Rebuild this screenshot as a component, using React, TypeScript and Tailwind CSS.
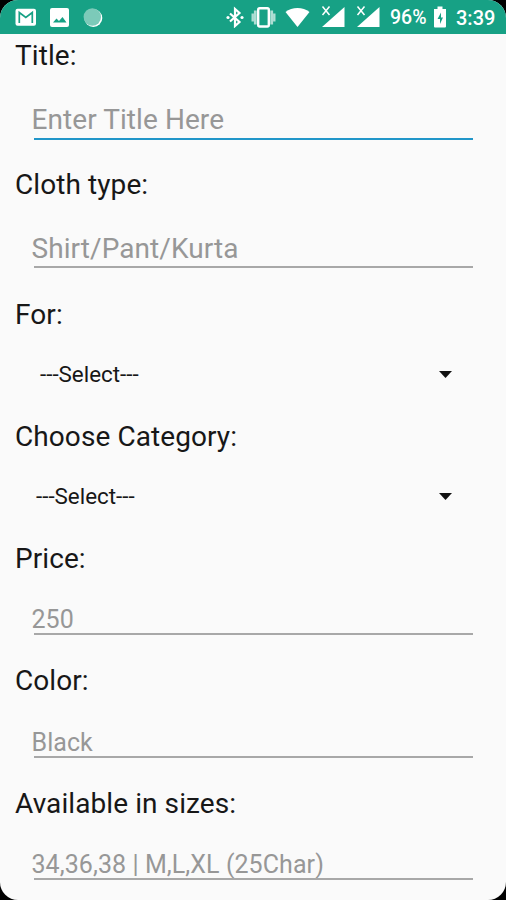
import React from 'react';

type FieldProps = {
  label: string;
  hint: string;
  className: string;
  hintClassName: string;
  lineClassName?: string;
};

const Label = ({ children }: { children: React.ReactNode }) => (
  <label className="block h-8 pl-[15px] text-[28px] leading-[34px] tracking-[0.08px] whitespace-nowrap text-[#171717]">
    {children}
  </label>
);

const TextField = ({ label, hint, className, hintClassName, lineClassName = 'bg-[#a8a8a8]' }: FieldProps) => (
  <div className={`flex flex-col ${className}`}>
    <Label>{label}</Label>
    <div className="flex flex-1 flex-col justify-end pr-[33px]">
      <span className={`pl-[31.5px] leading-8 tracking-[0.07px] whitespace-nowrap text-[#979797] ${hintClassName}`}>{hint}</span>
      <div className={`ml-[34px] h-[2px] ${lineClassName}`} />
    </div>
  </div>
);

const SelectField = ({ label, className, valueClassName }: { label: string; className: string; valueClassName: string }) => (
  <div className={className}>
    <Label>{label}</Label>
    <div className={`mt-7 flex h-8 items-center justify-between pr-[54px] ${valueClassName}`}>
      <span className="text-[22.4px] leading-8 text-[#171717]">---Select---</span>
      <svg className="h-[7px] w-[13px]" viewBox="0 0 13 7" fill="#111">
        <path d="M0 0h13L6.5 7z" />
      </svg>
    </div>
  </div>
);

const Signal = () => (
  <svg className="h-6 w-6" viewBox="0 0 24 24" fill="white">
    <path d="M23.5 2v20H1z" />
    <path d="M1.5 1.5l7 8.5M8.500 1.500l-7 8.500" stroke="white" strokeWidth="1.5" fill="none" />
  </svg>
);

const StatusBar = () => (
  <header className="flex h-[34px] items-center bg-[#17a185] text-white">
    <svg className="ml-[15px] h-[18px] w-[22px]" viewBox="0 0 22 18">
      <rect x="0.5" y="0.8" width="20.5" height="17" rx="2" fill="white" />
      <path d="M4.3 15V4.5l6.5 5 6.500-5V15" fill="none" stroke="#17a185" strokeWidth="1.7" />
    </svg>
    <svg className="ml-[13px] h-5 w-[19px]" viewBox="0 0 19 20">
      <rect y="1" width="19" height="19" rx="2" fill="white" />
      <path d="M3 15.5l3.500-4 2.500 2.500 3.500-4 4 5.500z" fill="#17a185" />
    </svg>
    <svg className="ml-[14px] h-5 w-5" viewBox="0 0 20 20">
      <circle cx="10.3" cy="11" r="9" fill="white" />
      <circle cx="9.3" cy="10" r="8.7" fill="#7ccab9" />
    </svg>
    <svg className="ml-[123px] h-[22px] w-[18px]" viewBox="0 0 18 22" fill="none" stroke="white" strokeWidth="2.2">
      <path d="M4 7.500l9.500 8.500-4.500 4V3l4.500 4-9.500 8.500" />
      <circle cx="2" cy="11.5" r="1.6" fill="white" stroke="none" />
      <circle cx="16" cy="11.5" r="1.6" fill="white" stroke="none" />
    </svg>
    <svg className="ml-[7px] h-[22px] w-[25px]" viewBox="0 0 25 22" fill="none" stroke="white">
      <rect x="7.2" y="2.2" width="10.6" height="18.3" rx="1.5" strokeWidth="2.4" />
      <path d="M4.3 4.500v14M20.700 4.500v14" strokeWidth="2.8" opacity="0.65" />
      <path d="M1.7 7.500v8M23.300 7.500v8" strokeWidth="2.4" opacity="0.65" />
    </svg>
    <svg className="ml-[9px] h-5 w-[25px]" viewBox="0 0 25 20" fill="white">
      <path d="M.5 5C7-.5 18-.5 24.500 5L12.500 20z" />
    </svg>
    <div className="ml-[11px] flex gap-[11px]">
      <Signal />
      <Signal />
    </div>
    <span className="ml-[10px] w-[38px] pt-[2px] text-[19.5px] leading-6 font-medium whitespace-nowrap">96%</span>
    <svg className="ml-[6px] h-[22px] w-[12px]" viewBox="0 0 12 22">
      <path d="M3.500.5h5V3H12v17.500q0 1-1 1H1q-1 0-1-1V3h3.500z" fill="white" />
      <path d="M7 6.500L3.500 13H6v5L9 11.500H7z" fill="#17a185" />
    </svg>
    <span className="ml-[10px] pt-[2px] text-[20px] leading-6 font-medium whitespace-nowrap">3:39</span>
  </header>
);

const App = () => {
  return (
    <div className="h-[900px] w-[506px] bg-black font-['Roboto',sans-serif]">
      <div className="flex h-full flex-col overflow-hidden rounded-[18px] bg-[#fafafa]">
        <StatusBar />
        <main className="pt-[5px]">
          <TextField
            label="Title:"
            hint="Enter Title Here"
            className="h-[101px]"
            hintClassName="text-[28px] mb-[2px]"
            lineClassName="bg-[#2196c9]"
          />
          <TextField label="Cloth type:" hint="Shirt/Pant/Kurta" className="mt-7 h-[100px]" hintClassName="text-[28px] mb-[1px]" />
          <SelectField label="For:" className="mt-[30px] h-[92px]" valueClassName="pl-10" />
          <SelectField label="Choose Category:" className="mt-[30px] h-[92px]" valueClassName="pl-9" />
          <TextField label="Price:" hint="250" className="mt-[30px] h-[93px]" hintClassName="text-[25px] -mb-[3px]" />
          <TextField label="Color:" hint="Black" className="mt-[29px] h-[94px]" hintClassName="text-[25px] -mb-[3px]" />
          <TextField
            label="Available in sizes:"
            hint="34,36,38 | M,L,XL (25Char)"
            className="mt-[29px] h-[93px]"
            hintClassName="text-[25px] -mb-[3px]"
          />
        </main>
      </div>
    </div>
  );
};

export default App;
